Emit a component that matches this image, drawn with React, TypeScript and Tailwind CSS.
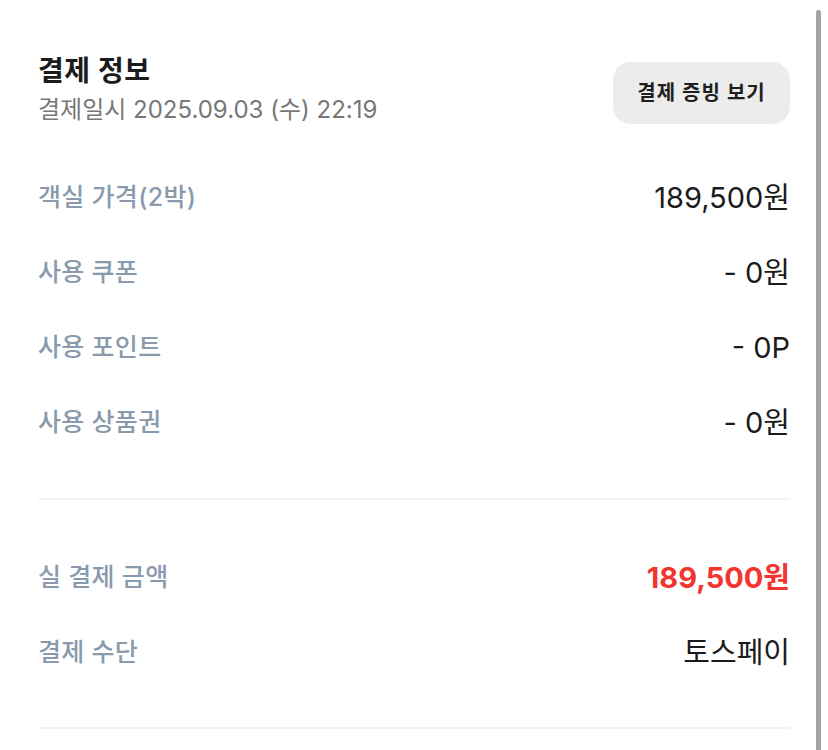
import React from 'react';

const font = "font-['Inter','Noto_Sans_CJK_KR',sans-serif]";

type Row = { label: string; value: string; highlight?: boolean };

const priceRows: Row[] = [
  { label: '객실 가격(2박)', value: '189,500원' },
  { label: '사용 쿠폰', value: '- 0원' },
  { label: '사용 포인트', value: '- 0P' },
  { label: '사용 상품권', value: '- 0원' },
];

const payRows: Row[] = [
  { label: '실 결제 금액', value: '189,500원', highlight: true },
  { label: '결제 수단', value: '토스페이' },
];

const InfoRow: React.FC<{ row: Row }> = ({ row }) => (
  <div className="h-[75px] flex items-center justify-between">
    <span className="text-[25px] font-medium text-[#8a9aad] tracking-[0.3px]">{row.label}</span>
    {row.highlight ? (
      <span className="text-[29px] font-bold text-[#f2362f]">{row.value}</span>
    ) : (
      <span className="text-[29px] font-normal text-[#1b1b1b]">{row.value}</span>
    )}
  </div>
);

export default function App() {
  return (
    <div className={`${font} relative h-[750px] overflow-hidden bg-white`}>
      {/* scrollbar thumb */}
      <div className="absolute right-[7px] top-[10px] w-[5px] h-[760px] rounded-full bg-[#a3a3a3]" />

      <div className="pl-[38px] pr-[38px] pt-[54px]">
        {/* Header */}
        <div className="flex items-start justify-between">
          <div>
            <h2 className="text-[28px] leading-[34px] font-bold text-[#1c1c1c] tracking-[0.6px]">결제 정보</h2>
            <p className="mt-[7px] text-[24px] leading-[30px] text-[#777777]">
              결제일시 2025.09.03 (수) 22:19
            </p>
          </div>
          <button className="mt-[8px] w-[177px] h-[62px] rounded-[18px] bg-[#ececec] text-[20px] font-semibold text-[#1f1f1f] tracking-[1px]">
            결제 증빙 보기
          </button>
        </div>

        {/* Price breakdown */}
        <div className="pt-[35px] pb-[38px]">
          {priceRows.map((r) => (
            <InfoRow key={r.label} row={r} />
          ))}
        </div>
        <div className="h-[2px] bg-[#f2f2f2]" />

        {/* Payment */}
        <div className="pt-[40px] pb-[37px]">
          {payRows.map((r) => (
            <InfoRow key={r.label} row={r} />
          ))}
        </div>
        <div className="h-[2px] bg-[#f2f2f2]" />
      </div>
    </div>
  );
}
